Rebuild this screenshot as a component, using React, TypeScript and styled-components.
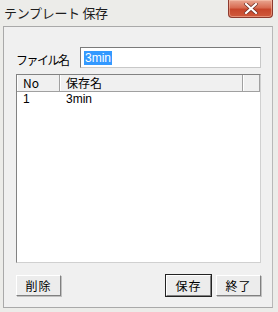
import styled, { createGlobalStyle } from 'styled-components';

const GlobalStyle = createGlobalStyle`
  html, body {
    margin: 0;
    padding: 0;
    background: #ececea;
  }
  body {
    font-family: "Noto Sans CJK JP", "DejaVu Sans", sans-serif;
    font-size: 12px;
    color: #000;
  }
`;

const Window = styled.div`
  width: 278px;
  height: 312px;
  display: flex;
  flex-direction: column;
  background: #ecece9;
  box-sizing: border-box;
`;

const TitleBar = styled.div`
  height: 26px;
  display: flex;
  align-items: flex-start;
  justify-content: space-between;
  padding: 0 5px 0 4px;
`;

const TitleText = styled.div`
  font-size: 13px;
  line-height: 13px;
  padding-top: 6px;
  color: #1e1e1e;
  letter-spacing: -0.3px;
`;

const CloseButton = styled.div`
  width: 45px;
  height: 18px;
  box-sizing: border-box;
  border: 1px solid #8d3a2e;
  border-top: none;
  border-radius: 0 0 4px 4px;
  background: linear-gradient(#e9a691 0%, #d86c52 45%, #c7462b 55%, #d05a3c 100%);
  display: flex;
  align-items: center;
  justify-content: center;
  box-shadow: inset 0 0 0 1px rgba(255, 210, 190, 0.45);
`;

const Panel = styled.div`
  flex: 1;
  margin: 0 5px 4px 3px;
  border: 1px solid #a9a9a9;
  border-right-color: #b8b8b8;
  background: #f0f0f0;
  display: flex;
  flex-direction: column;
  padding: 20px 11px 0 12px;
`;

const FileRow = styled.div`
  display: flex;
  align-items: center;
  height: 21px;
`;

const Label = styled.div`
  width: 64px;
  font-size: 12px;
  letter-spacing: -1.5px;
  padding-top: 3px;
`;

const TextBox = styled.div`
  flex: 1;
  height: 21px;
  box-sizing: border-box;
  border: 1px solid #7a7a7a;
  border-right-color: #c8c8c8;
  border-bottom-color: #c8c8c8;
  background: #fff;
  display: flex;
  align-items: center;
  padding-left: 3px;
`;

const Selected = styled.span`
  background: #3399ff;
  color: #fff;
  font-family: "Liberation Sans", sans-serif;
  font-size: 12px;
  line-height: 14px;
  padding: 0 1px;
`;

const ListBox = styled.div`
  margin-top: 6px;
  height: 189px;
  box-sizing: border-box;
  border: 1px solid #828282;
  border-right-color: #d0d0d0;
  border-bottom-color: #d0d0d0;
  background: #fff;
  display: flex;
  flex-direction: column;
`;

const HeaderRow = styled.div`
  display: flex;
  height: 16px;
  background: #f0f0f0;
  border-bottom: 1px solid #a0a0a0;
`;

const HeaderCell = styled.div<{ $w?: number }>`
  ${(p) => (p.$w ? `width: ${p.$w}px;` : 'flex: 1;')}
  box-sizing: border-box;
  border-right: 1px solid #a0a0a0;
  border-left: 1px solid #fff;
  padding-left: 5px;
  font-size: 12px;
  line-height: 16px;
  white-space: nowrap;
`;

const Row = styled.div`
  display: flex;
  height: 14px;
  margin-top: 0;
`;

const Cell = styled.div<{ $w?: number }>`
  ${(p) => (p.$w ? `width: ${p.$w}px;` : 'flex: 1;')}
  box-sizing: border-box;
  padding-left: 6px;
  font-family: "Liberation Sans", sans-serif;
  font-size: 12px;
  line-height: 14px;
`;

const ButtonBar = styled.div`
  display: flex;
  align-items: center;
  margin-top: 12px;
  gap: 5px;
`;

const Spacer = styled.div`
  flex: 1;
`;

const Button = styled.div<{ $default?: boolean }>`
  width: 45px;
  height: 21px;
  box-sizing: border-box;
  background: #ececec;
  border: 1px solid;
  border-color: #fff #808080 #808080 #fff;
  box-shadow: ${(p) => (p.$default ? '0 0 0 1px #222' : '1px 1px 0 #c0c0c0')};
  display: flex;
  align-items: center;
  justify-content: center;
  font-size: 12px;
  letter-spacing: 1px;
`;

export default function App() {
  return (
    <>
      <GlobalStyle />
      <Window>
        <TitleBar>
          <TitleText>テンプレート 保存</TitleText>
          <CloseButton>
            <svg width="14" height="11" viewBox="0 0 14 11">
              <path
                d="M2 1 L12 10 M12 1 L2 10"
                stroke="#6b2a20"
                strokeWidth="3.6"
                strokeLinecap="square"
              />
              <path
                d="M2 1 L12 10 M12 1 L2 10"
                stroke="#fff"
                strokeWidth="2.2"
                strokeLinecap="square"
              />
            </svg>
          </CloseButton>
        </TitleBar>
        <Panel>
          <FileRow>
            <Label>ファイル名</Label>
            <TextBox>
              <Selected>3min</Selected>
            </TextBox>
          </FileRow>
          <ListBox>
            <HeaderRow>
              <HeaderCell $w={43}>No</HeaderCell>
              <HeaderCell>保存名</HeaderCell>
              <HeaderCell $w={17} />
            </HeaderRow>
            <Row>
              <Cell $w={43}>1</Cell>
              <Cell>3min</Cell>
            </Row>
          </ListBox>
          <ButtonBar>
            <Button>削除</Button>
            <Spacer />
            <Button $default>保存</Button>
            <Button>終了</Button>
          </ButtonBar>
        </Panel>
      </Window>
    </>
  );
}
